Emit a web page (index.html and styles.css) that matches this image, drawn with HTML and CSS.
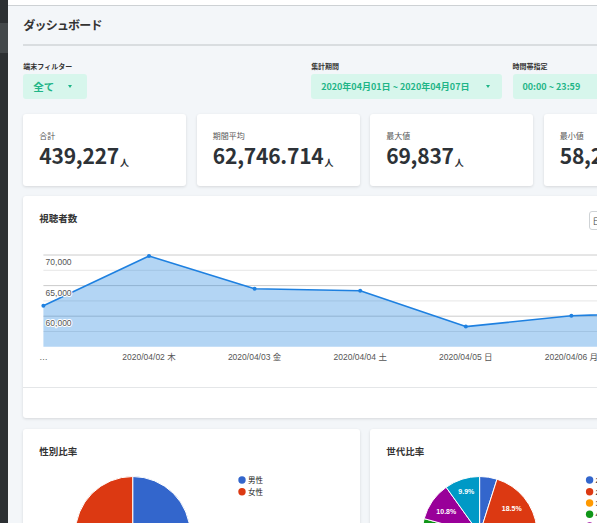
FILE: index.html
```html
<!DOCTYPE html>
<html lang="ja">
<head>
<meta charset="utf-8">
<title>ダッシュボード</title>
<link rel="stylesheet" href="styles.css">
</head>
<body>
<div class="app">
  <aside class="sidebar"><div class="sidebar-active"></div></aside>
  <div class="main">
    <div class="topbar"></div>
    <main class="content">
      <h1 class="page-title">ダッシュボード</h1>
      <hr class="divider">

      <div class="filters">
        <div class="filter">
          <div class="filter-label">端末フィルター</div>
          <div class="select select-device"><span>全て</span><span class="caret"></span></div>
        </div>
        <div class="filter filter-period">
          <div class="filter-label">集計期間</div>
          <div class="select select-period"><span>2020年04月01日 ~ 2020年04月07日</span><span class="caret"></span></div>
        </div>
        <div class="filter filter-time">
          <div class="filter-label">時間帯指定</div>
          <div class="select select-time"><span>00:00 ~ 23:59</span><span class="caret"></span></div>
        </div>
      </div>

      <div class="stats">
        <div class="stat-card">
          <div class="stat-label">合計</div>
          <div class="stat-value">439,227<span class="unit">人</span></div>
        </div>
        <div class="stat-card">
          <div class="stat-label">期間平均</div>
          <div class="stat-value">62,746.714<span class="unit">人</span></div>
        </div>
        <div class="stat-card">
          <div class="stat-label">最大値</div>
          <div class="stat-value">69,837<span class="unit">人</span></div>
        </div>
        <div class="stat-card">
          <div class="stat-label">最小値</div>
          <div class="stat-value">58,250<span class="unit">人</span></div>
        </div>
      </div>

      <section class="card chart-card">
        <div class="chart-body">
          <div class="card-head">
            <h2 class="card-title">視聴者数</h2>
            <button class="range-btn">日別</button>
          </div>
          <svg class="line-chart" width="683" height="130" viewBox="0 0 683 130">
            <line class="grid-major" x1="20.4" x2="654" y1="15" y2="15"/>
            <line class="grid-minor" x1="20.4" x2="654" y1="30.3" y2="30.3"/>
            <line class="grid-major" x1="20.4" x2="654" y1="45.6" y2="45.6"/>
            <line class="grid-minor" x1="20.4" x2="654" y1="60.9" y2="60.9"/>
            <line class="grid-major" x1="20.4" x2="654" y1="76.2" y2="76.2"/>
            <line class="grid-minor" x1="20.4" x2="654" y1="91.5" y2="91.5"/>
            <path class="area" d="M20.4 65.8 L126 16 L231.6 48.7 L337.2 50.7 L442.8 86.6 L548.4 75.8 L654 71.9 L654 106.8 L20.4 106.8 Z"/>
            <polyline class="series" points="20.4,65.8 126,16 231.6,48.7 337.2,50.7 442.8,86.6 548.4,75.8 654,71.9"/>
            <circle class="dot" cx="20.4" cy="65.8" r="2"/>
            <circle class="dot" cx="126" cy="16" r="2"/>
            <circle class="dot" cx="231.6" cy="48.7" r="2"/>
            <circle class="dot" cx="337.2" cy="50.7" r="2"/>
            <circle class="dot" cx="442.8" cy="86.6" r="2"/>
            <circle class="dot" cx="548.4" cy="75.8" r="2"/>
            <circle class="dot" cx="654" cy="71.9" r="2"/>
            <text class="ylabel" x="22.6" y="25">70,000</text>
            <text class="ylabel" x="22.6" y="55.8">65,000</text>
            <text class="ylabel" x="22.6" y="86.2">60,000</text>
            <text class="xlabel" x="20.4" y="120">…</text>
            <text class="xlabel" x="126" y="120">2020/04/02 木</text>
            <text class="xlabel" x="231.6" y="120">2020/04/03 金</text>
            <text class="xlabel" x="337.2" y="120">2020/04/04 土</text>
            <text class="xlabel" x="442.8" y="120">2020/04/05 日</text>
            <text class="xlabel" x="548.4" y="120">2020/04/06 月</text>
            <text class="xlabel" x="654" y="120">2020/04/07 火</text>
          </svg>
        </div>
        <div class="chart-footer"></div>
      </section>

      <div class="pies">
        <section class="card pie-card">
          <h2 class="card-title">性別比率</h2>
          <svg class="pie-chart" width="336" height="140" viewBox="0 0 336 140">
            <path class="s-blue" d="M109.7 68 L109.7 10.5 A57.5 57.5 0 0 1 109.7 125.5 Z"/>
            <path class="s-red" d="M109.7 68 L109.7 125.5 A57.5 57.5 0 0 1 109.7 10.5 Z"/>
            <circle class="s-blue" cx="219" cy="14" r="3.7"/>
            <text class="legend" x="225" y="16.8">男性</text>
            <circle class="s-red" cx="219" cy="25.7" r="3.7"/>
            <text class="legend" x="225" y="28.5">女性</text>
          </svg>
        </section>
        <section class="card pie-card">
          <h2 class="card-title">世代比率</h2>
          <svg class="pie-chart" width="336" height="140" viewBox="0 0 336 140">
            <path class="s-blue" d="M109.6 68 L109.6 10.5 A57.5 57.5 0 0 1 126.99 13.19 Z"/>
            <path class="s-red" d="M109.6 68 L126.99 13.19 A57.5 57.5 0 0 1 166.81 62.19 Z"/>
            <path class="s-orange" d="M109.6 68 L166.81 62.19 A57.5 57.5 0 0 1 99.62 124.63 Z"/>
            <path class="s-green" d="M109.6 68 L99.62 124.63 A57.5 57.5 0 0 1 54.19 52.63 Z"/>
            <path class="s-purple" d="M109.6 68 L54.19 52.63 A57.5 57.5 0 0 1 76.13 21.25 Z"/>
            <path class="s-cyan" d="M109.6 68 L76.13 21.25 A57.5 57.5 0 0 1 109.6 10.5 Z"/>
            <text class="slice-label" x="141.7" y="44.5">18.5%</text>
            <text class="slice-label" x="137.8" y="100.8">29.4%</text>
            <text class="slice-label" x="74.6" y="92.6">26.5%</text>
            <text class="slice-label" x="76.3" y="47.6">10.8%</text>
            <text class="slice-label" x="96.3" y="28.3">9.9%</text>
            <circle class="s-blue" cx="219.6" cy="14" r="3.7"/>
            <text class="legend" x="225.6" y="16.8">20歳未満</text>
            <circle class="s-red" cx="219.6" cy="25.7" r="3.7"/>
            <text class="legend" x="225.6" y="28.5">20代</text>
            <circle class="s-orange" cx="219.6" cy="37" r="3.7"/>
            <text class="legend" x="225.6" y="39.8">30代</text>
            <circle class="s-green" cx="219.6" cy="48.3" r="3.7"/>
            <text class="legend" x="225.6" y="51.1">40代</text>
            <circle class="s-purple" cx="219.6" cy="60" r="3.7"/>
            <text class="legend" x="225.6" y="62.8">50代</text>
            <circle class="s-cyan" cx="219.6" cy="71.7" r="3.7"/>
            <text class="legend" x="225.6" y="74.5">60代以上</text>
          </svg>
        </section>
      </div>
    </main>
  </div>
</div>
</body>
</html>
```

FILE: styles.css
```css
* { box-sizing: border-box; }

html, body {
  margin: 0;
  padding: 0;
}

body {
  background: #f3f6f9;
  font-family: "Noto Sans CJK JP", "Noto Sans", sans-serif;
  color: #333;
  overflow: hidden;
}

.app {
  display: flex;
  min-height: 100vh;
}

.sidebar {
  flex: 0 0 7.5px;
  background: #2c3033;
}

.sidebar-active {
  margin-top: 23px;
  height: 30px;
  background: #43484b;
}

.main {
  flex: 0 0 714px;
  width: 714px;
}

.topbar {
  height: 6px;
  background: #fff;
  border-bottom: 1px solid #cdd1d4;
}

.content {
  padding: 0 15px 40px 15.8px;
}

.page-title {
  margin: 11px 0 0;
  font-size: 12px;
  line-height: 16px;
  font-weight: 700;
  letter-spacing: -0.8px;
  color: #333;
}

.divider {
  margin: 11px 0 0;
  border: 0;
  height: 2px;
  background: #d9dde0;
}

/* filters */
.filters {
  display: flex;
  margin-top: 16px;
}

.filter-period { margin-left: auto; }
.filter-time { margin-left: 10.7px; }

.filter-label {
  font-size: 7px;
  line-height: 9px;
  font-weight: 700;
  color: #333;
  margin-bottom: 3px;
}

.select {
  height: 25px;
  display: flex;
  align-items: center;
  justify-content: space-between;
  padding: 0 12px 0 10px;
  background: #d7f6ec;
  border-radius: 3px;
  color: #1fb587;
  font-size: 9px;
  font-weight: 700;
  white-space: nowrap;
}

.select-device { width: 63.4px; padding-right: 15px; font-size: 10.5px; }
.select-period { width: 190.7px; }
.select-time { width: 194px; }

.caret {
  width: 0;
  height: 0;
  border-left: 2.5px solid transparent;
  border-right: 2.5px solid transparent;
  border-top: 3px solid #1fb587;
}

/* stats */
.stats {
  display: grid;
  grid-template-columns: repeat(4, 1fr);
  column-gap: 10.7px;
  margin-top: 15px;
}

.stat-card {
  height: 72px;
  background: #fff;
  border-radius: 3px;
  box-shadow: 0 1px 3px rgba(0, 0, 0, 0.12);
  padding: 17px 16px 0;
}

.stat-label {
  font-size: 8px;
  line-height: 10px;
  color: #555;
}

.stat-value {
  font-size: 21px;
  line-height: 28px;
  font-weight: 700;
  letter-spacing: -0.2px;
  color: #2d3237;
  white-space: nowrap;
}

.unit {
  font-size: 9px;
  margin-left: 1px;
  letter-spacing: 0;
  vertical-align: -2px;
}

/* cards */
.card {
  background: #fff;
  border-radius: 3px;
  box-shadow: 0 1px 3px rgba(0, 0, 0, 0.12);
}

.chart-card { margin-top: 10px; }

.chart-body {
  height: 191px;
  padding: 15px 16px 0;
}

.card-head {
  display: flex;
  justify-content: space-between;
  align-items: flex-start;
}

.card-title {
  margin: 0;
  font-size: 9.5px;
  line-height: 14px;
  font-weight: 700;
  color: #333;
}

.range-btn {
  width: 102px;
  height: 19px;
  padding: 0 3px;
  border: 1px solid #cfd3d6;
  border-radius: 3px;
  background: #fff;
  font-family: "Noto Sans CJK JP", sans-serif;
  font-size: 8px;
  color: #444;
  text-align: left;
}

.line-chart {
  display: block;
  margin: 10px 0 0 -16px;
  overflow: visible;
}

.grid-major { stroke: #cccccc; stroke-width: 1; }
.grid-minor { stroke: #e6e6e6; stroke-width: 1; }

.area { fill: #2185e0; fill-opacity: 0.34; stroke: none; }
.series { fill: none; stroke: #1e80e0; stroke-width: 1.6; stroke-linejoin: round; }
.dot { fill: #1e80e0; }

.ylabel, .xlabel {
  font-family: "Liberation Sans", "Noto Sans CJK JP", sans-serif;
  font-size: 8.5px;
  fill: #555;
}

.ylabel {
  paint-order: stroke;
  stroke: #fff;
  stroke-width: 2px;
  stroke-linejoin: round;
}

.xlabel { text-anchor: middle; }

.chart-footer {
  height: 31px;
  border-top: 1px solid #e4e6e8;
}

/* pies */
.pies {
  display: grid;
  grid-template-columns: 1fr 1fr;
  column-gap: 10.7px;
  margin-top: 10.7px;
}

.pie-card {
  height: 200px;
  padding-top: 15px;
}

.pie-card .card-title { padding-left: 16px; }

.pie-chart {
  display: block;
  margin-top: 8.7px;
}

.pie-chart path { stroke: #fff; stroke-width: 1; }

.s-blue { fill: #3366cc; }
.s-red { fill: #dc3912; }
.s-orange { fill: #ff9900; }
.s-green { fill: #109618; }
.s-purple { fill: #990099; }
.s-cyan { fill: #0099c6; }

.slice-label {
  font-family: "Liberation Sans", sans-serif;
  font-size: 7px;
  font-weight: 700;
  fill: #fff;
  text-anchor: middle;
}

.legend {
  font-family: "Liberation Sans", "Noto Sans CJK JP", sans-serif;
  font-size: 7.5px;
  fill: #222;
}
```
